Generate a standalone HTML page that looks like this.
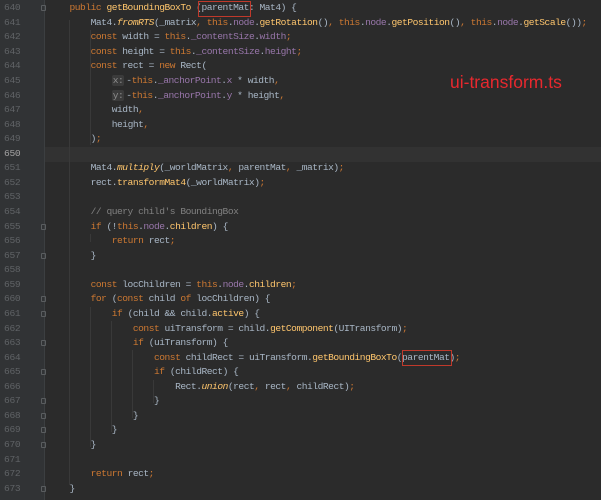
<!DOCTYPE html>
<html><head><meta charset="utf-8"><style>
body{margin:0;width:601px;height:500px;overflow:hidden;background:#2b2b2b;position:relative;font-family:"Liberation Mono",monospace;font-size:9.6px;letter-spacing:-0.48px}
#gut{position:absolute;left:0;top:0;width:44px;height:500px;background:#313335}
#sep{position:absolute;left:44px;top:0;width:1px;height:500px;background:#3c3f41}
.cur{position:absolute;left:45px;right:0;top:147px;height:14.5px;background:#323232}
.ln{position:absolute;left:4px;color:#606366;height:14.56px;line-height:14.56px;white-space:pre;letter-spacing:-0.3px}
.l{position:absolute;left:69.5px;color:#a9b7c6;height:14.56px;line-height:14.56px;white-space:pre}
.k{color:#cc7832}.p{color:#9876aa}.f{color:#ffc66d}.i{font-style:italic}.c{color:#808080}
.g{position:absolute;width:1px;background:#393939}
.fold{position:absolute;left:41px;width:5px;height:6px;border:1px solid #5a5d5f;border-radius:1px;box-sizing:border-box}
.box{position:absolute;border:1px solid #c0392b}
.hint{background:#3b3b3b;color:#8c8c8c;border-radius:2px;padding:0 1px;margin-right:2px}
#lbl{position:absolute;left:450px;top:72px;color:#e8282e;font-family:"Liberation Sans",sans-serif;font-size:17.5px;letter-spacing:0}
</style></head><body>
<div id="gut"></div><div id="sep"></div><div class="cur"></div>
<div class="g" style="left:90px;top:30px;height:115px"></div>
<div class="g" style="left:90px;top:234px;height:8px"></div>
<div class="g" style="left:90px;top:307px;height:140px"></div>
<div class="g" style="left:111px;top:321px;height:111px"></div>
<div class="g" style="left:132px;top:350px;height:68px"></div>
<div class="g" style="left:153px;top:380px;height:23px"></div>
<div class="g" style="left:69px;top:20px;height:465px"></div>
<div id="code"></div>
<div class="box" style="left:198px;top:1px;width:51px;height:14px"></div>
<div class="box" style="left:402px;top:350px;width:48px;height:14px"></div>
<div id="lbl">ui-transform.ts</div>
<script>
var L=[
[0,'<span class="k">public </span><span class="f">getBoundingBoxTo</span> (parentMat: Mat4) {'],
[4,'Mat4.<span class="f i">fromRTS</span>(_matrix<span class="k">, this</span>.<span class="p">node</span>.<span class="f">getRotation</span>()<span class="k">, this</span>.<span class="p">node</span>.<span class="f">getPosition</span>()<span class="k">, this</span>.<span class="p">node</span>.<span class="f">getScale</span>())<span class="k">;</span>'],
[4,'<span class="k">const </span>width = <span class="k">this</span>.<span class="p">_contentSize</span>.<span class="p">width</span><span class="k">;</span>'],
[4,'<span class="k">const </span>height = <span class="k">this</span>.<span class="p">_contentSize</span>.<span class="p">height</span><span class="k">;</span>'],
[4,'<span class="k">const </span>rect = <span class="k">new </span>Rect('],
[8,'<span class="hint">x:</span>-<span class="k">this</span>.<span class="p">_anchorPoint</span>.<span class="p">x</span> * width<span class="k">,</span>'],
[8,'<span class="hint">y:</span>-<span class="k">this</span>.<span class="p">_anchorPoint</span>.<span class="p">y</span> * height<span class="k">,</span>'],
[8,'width<span class="k">,</span>'],
[8,'height<span class="k">,</span>'],
[4,')<span class="k">;</span>'],
[0,''],
[4,'Mat4.<span class="f i">multiply</span>(_worldMatrix<span class="k">, </span>parentMat<span class="k">, </span>_matrix)<span class="k">;</span>'],
[4,'rect.<span class="f">transformMat4</span>(_worldMatrix)<span class="k">;</span>'],
[0,''],
[4,'<span class="c">// query child\'s BoundingBox</span>'],
[4,'<span class="k">if </span>(!<span class="k">this</span>.<span class="p">node</span>.<span class="f">children</span>) {'],
[8,'<span class="k">return </span>rect<span class="k">;</span>'],
[4,'}'],
[0,''],
[4,'<span class="k">const </span>locChildren = <span class="k">this</span>.<span class="p">node</span>.<span class="f">children</span><span class="k">;</span>'],
[4,'<span class="k">for </span>(<span class="k">const </span>child <span class="k">of </span>locChildren) {'],
[8,'<span class="k">if </span>(child && child.<span class="f">active</span>) {'],
[12,'<span class="k">const </span>uiTransform = child.<span class="f">getComponent</span>(UITransform)<span class="k">;</span>'],
[12,'<span class="k">if </span>(uiTransform) {'],
[16,'<span class="k">const </span>childRect = uiTransform.<span class="f">getBoundingBoxTo</span>(parentMat)<span class="k">;</span>'],
[16,'<span class="k">if </span>(childRect) {'],
[20,'Rect.<span class="f i">union</span>(rect<span class="k">, </span>rect<span class="k">, </span>childRect)<span class="k">;</span>'],
[16,'}'],
[12,'}'],
[8,'}'],
[4,'}'],
[0,''],
[4,'<span class="k">return </span>rect<span class="k">;</span>'],
[0,'}']];
var h='',folds={0:1,15:1,17:2,20:1,21:1,23:1,25:1,27:2,28:2,29:2,30:2,33:2};
L.forEach(function(a,i){var t=1.2+i*14.56;
h+='<div class="ln" style="top:'+t+'px'+(i==10?';color:#a4a3a3':'')+'">'+(640+i)+'</div>';
h+='<div class="l" style="top:'+t+'px;left:'+(69.5+a[0]*5.28)+'px">'+a[1]+'</div>';
if(folds[i])h+='<div class="fold" style="top:'+(t+4)+'px"></div>';});
document.getElementById('code').innerHTML=h;
</script>
</body></html>
